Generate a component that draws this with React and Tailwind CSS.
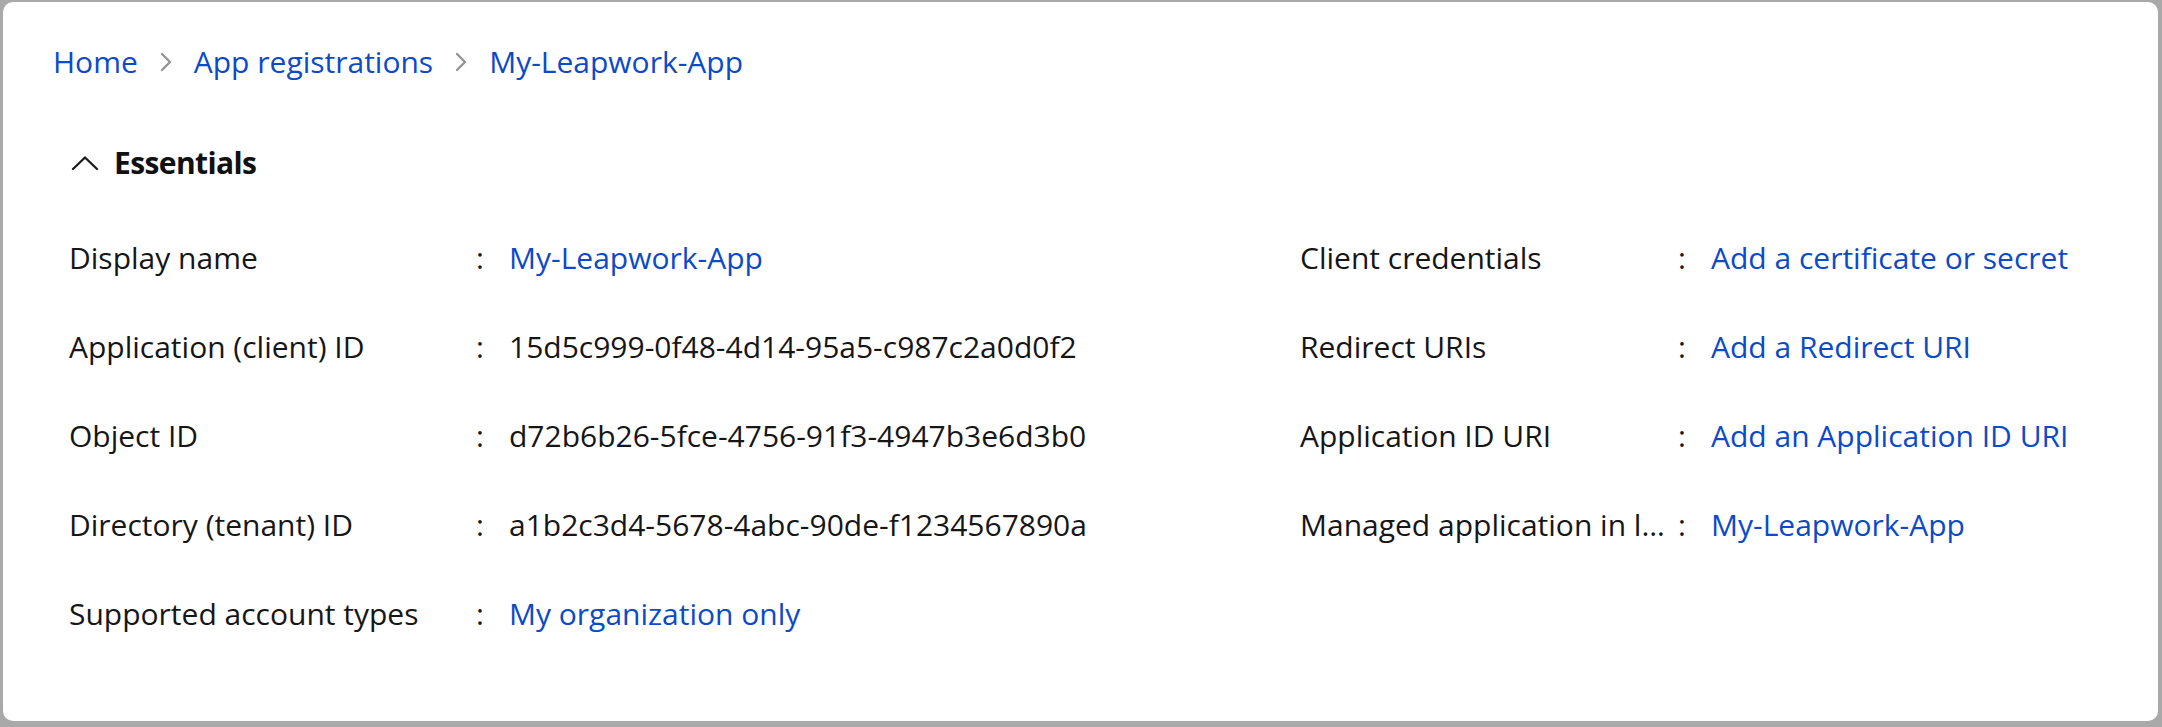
import React from "react";

const font = { fontFamily: '"Open Sans", "Noto Sans", Arial, sans-serif' };

function Chevron() {
  return (
    <svg width="16" height="22" viewBox="0 0 16 22" className="mx-[20px] shrink-0">
      <polyline points="4,3 12,11 4,19" fill="none" stroke="#929292" strokeWidth="2.3" strokeLinecap="round" strokeLinejoin="round" />
    </svg>
  );
}

function Row({ label, value, link, labelW, trunc }) {
  return (
    <div className="flex h-[89px] items-center">
      <div className={`${labelW} shrink-0 pr-[8px] text-[#161616]`}>
        <div className={trunc ? "truncate" : ""}>{label}</div>
      </div>
      <div className="w-[33px] shrink-0 text-[#161616]">:</div>
      <div className={link ? "text-[#0d4ac7]" : "text-[#161616]"}>{value}</div>
    </div>
  );
}

export default function App() {
  const left = [
    ["Display name", "My-Leapwork-App", true],
    ["Application (client) ID", "15d5c999-0f48-4d14-95a5-c987c2a0d0f2", false],
    ["Object ID", "d72b6b26-5fce-4756-91f3-4947b3e6d3b0", false],
    ["Directory (tenant) ID", "a1b2c3d4-5678-4abc-90de-f1234567890a", false],
    ["Supported account types", "My organization only", true],
  ];
  const right = [
    ["Client credentials", "Add a certificate or secret"],
    ["Redirect URIs", "Add a Redirect URI"],
    ["Application ID URI", "Add an Application ID URI"],
    ["Managed application in local directory", "My-Leapwork-App"],
  ];
  return (
    <div className="h-[727px] w-full bg-[#a9a9a9] pt-[2px] pl-[3px] pr-[4px] pb-[6px]" style={font}>
      <div className="h-full rounded-[10px] bg-white pt-[42px] pl-[50px] text-[30px] leading-[36px]">
        <nav className="flex h-[36px] items-center text-[#0d4ac7]">
          <span>Home</span>
          <Chevron />
          <span>App registrations</span>
          <Chevron />
          <span>My-Leapwork-App</span>
        </nav>
        <div className="mt-[65px] ml-[18px] flex h-[36px] items-center">
          <svg width="28" height="15" viewBox="0 0 28 15" className="shrink-0">
            <polyline points="2,13 14,1.5 26,13" fill="none" stroke="#1b1b1b" strokeWidth="2.3" strokeLinecap="round" strokeLinejoin="round" />
          </svg>
          <span className="ml-[15px] font-bold tracking-[-0.6px] text-[#111]">Essentials</span>
        </div>
        <div className="mt-[32px] ml-[16px] flex">
          <div className="w-[1231px] shrink-0">
            {left.map(([l, v, link]) => (
              <Row key={l} label={l} value={v} link={link} labelW="w-[407px]" />
            ))}
          </div>
          <div className="flex-1">
            {right.map(([l, v], i) => (
              <Row key={l} label={l} value={v} link labelW="w-[378px]" trunc={i === 3} />
            ))}
          </div>
        </div>
      </div>
    </div>
  );
}
